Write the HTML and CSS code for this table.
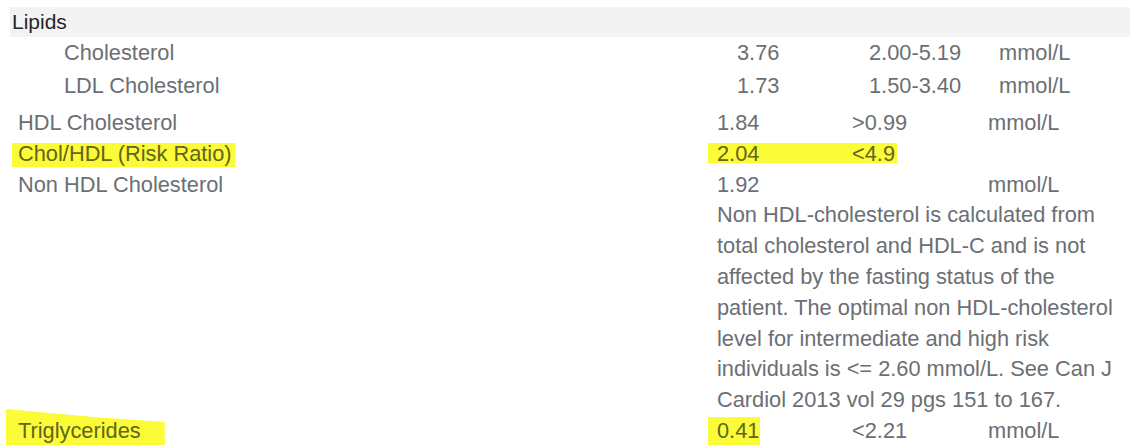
FILE: index.html
```html
<!DOCTYPE html>
<html>
<head>
<meta charset="utf-8">
<title>Lipids</title>
<link rel="stylesheet" href="styles.css">
</head>
<body>
<div class="page">
  <section class="panel panel-top">
    <div class="band">Lipids</div>
    <div class="rows rows-top">
      <div class="name">Cholesterol</div><div class="val">3.76</div><div class="rng">2.00-5.19</div><div class="unit">mmol/L</div>
      <div class="name">LDL Cholesterol</div><div class="val">1.73</div><div class="rng">1.50-3.40</div><div class="unit">mmol/L</div>
    </div>
  </section>
  <section class="panel panel-bottom">
    <div class="rows rows-bottom">
      <div class="name">HDL Cholesterol</div><div class="val">1.84</div><div class="rng">&gt;0.99</div><div class="unit">mmol/L</div>
      <div class="name hl ratio-name">Chol/HDL (Risk Ratio)</div><div class="val hl ratio-val">2.04</div><div class="rng hl ratio-rng">&lt;4.9</div><div class="unit"></div>
      <div class="name">Non HDL Cholesterol</div><div class="val">1.92</div><div class="rng"></div><div class="unit">mmol/L</div>
      <div class="name"></div>
      <div class="note">Non HDL-cholesterol is calculated from<br>total cholesterol and HDL-C and is not<br>affected by the fasting status of the<br>patient. The optimal non HDL-cholesterol<br>level for intermediate and high risk<br>individuals is &lt;= 2.60 mmol/L. See Can J<br>Cardiol 2013 vol 29 pgs 151 to 167.</div>
      <div class="name hl tri-name">Triglycerides</div><div class="val hl tri-val">0.41</div><div class="rng">&lt;2.21</div><div class="unit">mmol/L</div>
    </div>
  </section>
</div>
</body>
</html>
```
FILE: styles.css
```css
html, body {
  margin: 0;
  padding: 0;
  background: #ffffff;
  overflow: hidden;
}
body {
  font-family: "Liberation Sans", Arial, Helvetica, sans-serif;
  color: #6b6f74;
  width: 1140px;
  height: 445px;
}
.page {
  display: flex;
  flex-direction: column;
}
.panel-top {
  padding-top: 7px;
}
.band {
  margin-left: 10px;
  width: 1118px;
  height: 30px;
  line-height: 30px;
  padding-left: 2px;
  background: #f3f3f3;
  color: #262626;
  font-size: 21px;
}
.rows {
  display: grid;
  font-size: 21.8px;
  white-space: nowrap;
}
.rows-top {
  margin-top: -1px;
  padding-left: 64px;
  grid-template-columns: 673px 132px 130px auto;
  grid-auto-rows: 33px;
  line-height: 33px;
}
.panel-bottom {
  padding-top: 6px;
}
.rows-bottom {
  padding-left: 18px;
  grid-template-columns: 699px 135px 136px auto;
  line-height: 30.8px;
}
.note {
  grid-column: 2 / span 3;
  white-space: nowrap;
}
.hl {
  color: #62641f;
}
.ratio-name {
  justify-self: start;
  margin-left: -6px;
  padding: 0 3px 0 6px;
  background: linear-gradient(#fcfb37, #fcfb37) 0 4px / 100% 24px no-repeat;
}
.ratio-val {
  margin-left: -9px;
  padding-left: 9px;
  background: linear-gradient(#fcfb37, #fcfb37) 0 4px / 100% 20px no-repeat;
}
.ratio-rng {
  justify-self: start;
  padding-right: 2px;
  background: linear-gradient(#fcfb37, #fcfb37) 0 4px / 100% 20px no-repeat;
}
.tri-name {
  justify-self: start;
  margin-left: -12px;
  padding: 7px 24px 12px 12px;
  margin-top: -7px;
  background: #fcfb37;
  clip-path: polygon(0 0, 55% 8px, 100% 13px, 100% 100%, 0 100%);
}
.tri-val {
  justify-self: start;
  margin-left: -9px;
  padding: 0 1px 12px 9px;
  background: linear-gradient(#fcfb37, #fcfb37) 0 1.5px / 100% 100% no-repeat;
}
```
